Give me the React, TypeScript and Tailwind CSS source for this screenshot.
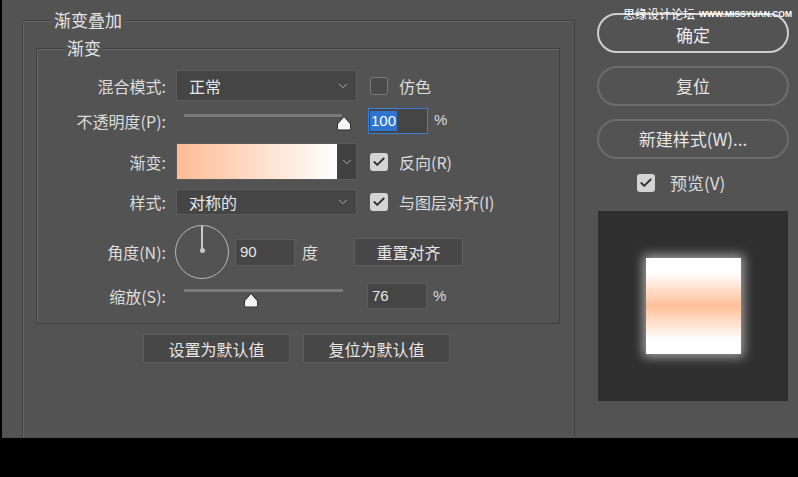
import React from 'react';
import { Check, ChevronDown } from 'lucide-react';

const font = { fontFamily: '"Noto Sans CJK SC", "Noto Sans", sans-serif' };

const Thumb = () => (
  <svg width="16" height="16" viewBox="0 0 16 16">
    <path d="M8 1.5 L14.5 9 V13.5 Q14.5 15 13 15 H3 Q1.5 15 1.5 13.5 V9 Z" fill="#f4f4f4" stroke="#2e2e2e" strokeWidth="1" strokeLinejoin="round" />
  </svg>
);

const Box = ({ checked }: { checked?: boolean }) =>
  checked ? (
    <div className="w-[18px] h-[18px] rounded-[3px] bg-[#d4d4d4] flex items-center justify-center">
      <Check size={14} strokeWidth={3.2} className="text-[#2f2f2f]" />
    </div>
  ) : (
    <div className="w-[18px] h-[18px] rounded-[3px] border border-[#7a7a7a] bg-[#4a4a4a]"></div>
  );

const Select = ({ value, h }: { value: string; h: string }) => (
  <div className={`w-[181px] ${h} bg-[#454545] border border-[#5b5b5b] flex items-center justify-between pl-[12px] pr-[6px]`}>
    <span className="text-[16px] text-[#e6e6e6]">{value}</span>
    <ChevronDown size={14} strokeWidth={1.6} className="text-[#b5b5b5]" />
  </div>
);

const Label = ({ children }: { children: React.ReactNode }) => (
  <div className="w-[129px] text-right text-[16px] text-[#dcdcdc] shrink-0">{children}</div>
);

const App = () => {
  return (
    <div className="w-[798px] h-[477px] bg-black overflow-hidden" style={font}>
      <div className="relative ml-[2px] h-[438px] bg-[#535353] overflow-hidden flex">
        {/* watermark */}
        <div className="absolute top-[7px] left-[621px] flex items-center gap-[4px] text-white whitespace-nowrap">
          <span className="text-[12px] leading-[14px]">思缘设计论坛</span>
          <span className="text-[8.5px] leading-[14px] font-bold" style={{ fontFamily: '"Liberation Sans", sans-serif' }}>
            WWW.MISSYUAN.COM
          </span>
        </div>

        {/* left: 渐变叠加 group */}
        <div className="ml-[20px] mt-[20px] w-[553px] h-[440px] border border-[#404040] shadow-[inset_1px_1px_0_#676767] shrink-0">
          <div className="-mt-[11px] ml-[29px] px-[2px] w-fit bg-[#535353] text-[17px] leading-[20px] text-[#e4e4e4]">渐变叠加</div>

          <div className="ml-[13px] mt-[18px] w-[524px] h-[276px] border border-[#404040] shadow-[inset_1px_1px_0_#676767]">
            <div className="-mt-[11px] ml-[28px] px-[2px] w-fit bg-[#535353] text-[17px] leading-[20px] text-[#e4e4e4]">渐变</div>

            <div className="flex flex-col">
              {/* 混合模式 */}
              <div className="mt-[12px] h-[31px] flex items-center">
                <Label>混合模式:</Label>
                <div className="ml-[10px]">
                  <Select value="正常" h="h-[31px]" />
                </div>
                <div className="ml-[13px]">
                  <Box />
                </div>
                <span className="ml-[11px] text-[16px] text-[#dcdcdc]">仿色</span>
              </div>

              {/* 不透明度 */}
              <div className="mt-[7px] h-[25px] flex items-center">
                <Label>不透明度(P):</Label>
                <div className="ml-[10px] w-[181px] h-[25px] relative">
                  <div className="absolute left-[8px] top-[6px] w-[158px] h-[3px] bg-[#7a7a7a]"></div>
                  <div className="absolute left-[160px] top-[7px]">
                    <Thumb />
                  </div>
                </div>
                <div className="ml-[11px] w-[60px] h-[26px] border border-[#3d7fd4] bg-[#454545] flex items-center pl-[1px]">
                  <span className="bg-[#2f74d0] text-white text-[15px] leading-[20px] px-[1px]" style={{ fontFamily: '"Liberation Sans", sans-serif' }}>100</span>
                </div>
                <span className="ml-[6px] text-[15px] text-[#dcdcdc]" style={{ fontFamily: '"Liberation Sans", sans-serif' }}>%</span>
              </div>

              {/* 渐变 */}
              <div className="mt-[10px] h-[37px] flex items-center">
                <Label>渐变:</Label>
                <div className="ml-[10px] w-[181px] h-[37px] flex border border-[#5b5b5b]">
                  <div className="w-[160px] h-full bg-gradient-to-r from-[#ffbb94] to-white"></div>
                  <div className="flex-1 bg-[#414141] flex items-center justify-center">
                    <ChevronDown size={14} strokeWidth={1.6} className="text-[#b5b5b5]" />
                  </div>
                </div>
                <div className="ml-[13px]">
                  <Box checked />
                </div>
                <span className="ml-[11px] text-[16px] text-[#dcdcdc]">反向(R)</span>
              </div>

              {/* 样式 */}
              <div className="mt-[9px] h-[25px] flex items-center">
                <Label>样式:</Label>
                <div className="ml-[10px]">
                  <Select value="对称的" h="h-[26px]" />
                </div>
                <div className="ml-[13px]">
                  <Box checked />
                </div>
                <span className="ml-[11px] text-[16px] text-[#dcdcdc]">与图层对齐(I)</span>
              </div>

              {/* 角度 */}
              <div className="mt-[11px] h-[54px] flex items-center">
                <Label>角度(N):</Label>
                <div className="ml-[9px] w-[54px] h-[54px] rounded-full border-[1.5px] border-[#b8b8b8] flex flex-col items-center">
                  <div className="w-[1.5px] h-[24px] bg-[#c8c8c8]"></div>
                  <div className="-mt-[2px] w-[5px] h-[5px] rounded-full bg-[#c8c8c8]"></div>
                </div>
                <div className="ml-[6px] w-[60px] h-[27px] bg-[#454545] border border-[#5b5b5b] flex items-center pl-[4px] text-[15px] text-[#e6e6e6]" style={{ fontFamily: '"Liberation Sans", sans-serif' }}>
                  90
                </div>
                <span className="ml-[7px] w-[52px] text-[16px] text-[#dcdcdc]">度</span>
                <div className="w-[109px] h-[28px] bg-[#474747] border border-[#5e5e5e] flex items-center justify-center text-[16px] text-[#e6e6e6]">
                  重置对齐
                </div>
              </div>

              {/* 缩放 */}
              <div className="mt-[4px] h-[26px] flex items-center">
                <Label>缩放(S):</Label>
                <div className="ml-[10px] w-[181px] h-[26px] relative">
                  <div className="absolute left-[8px] top-[6px] w-[159px] h-[3px] bg-[#7a7a7a]"></div>
                  <div className="absolute left-[67px] top-[9px]">
                    <Thumb />
                  </div>
                </div>
                <div className="ml-[10px] w-[60px] h-[26px] bg-[#454545] border border-[#5b5b5b] flex items-center pl-[4px] text-[15px] text-[#e6e6e6]" style={{ fontFamily: '"Liberation Sans", sans-serif' }}>
                  76
                </div>
                <span className="ml-[6px] text-[15px] text-[#dcdcdc]" style={{ fontFamily: '"Liberation Sans", sans-serif' }}>%</span>
              </div>
            </div>
          </div>

          <div className="ml-[120px] mt-[10px] flex gap-[13px]">
            <div className="w-[147px] h-[29px] bg-[#474747] border border-[#5e5e5e] flex items-center justify-center text-[16px] text-[#e6e6e6]">
              设置为默认值
            </div>
            <div className="w-[147px] h-[29px] bg-[#474747] border border-[#5e5e5e] flex items-center justify-center text-[16px] text-[#e6e6e6]">
              复位为默认值
            </div>
          </div>
        </div>

        {/* right column */}
        <div className="ml-[22px] mt-[13px] w-[192px] flex flex-col shrink-0">
          <div className="h-[40px] rounded-full border-2 border-[#cfcfcf] flex items-center justify-center pt-[4px] text-[17px] text-[#ededed]">确定</div>
          <div className="mt-[13px] h-[40px] rounded-full border-2 border-[#6c6c6c] flex items-center justify-center text-[17px] text-[#e6e6e6]">复位</div>
          <div className="mt-[13px] h-[40px] rounded-full border-2 border-[#6c6c6c] flex items-center justify-center text-[17px] text-[#e6e6e6]">新建样式(W)...</div>
          <div className="mt-[15px] h-[18px] flex items-center">
            <div className="ml-[40px]">
              <Box checked />
            </div>
            <span className="ml-[15px] text-[17px] text-[#dcdcdc]">预览(V)</span>
          </div>
          <div className="mt-[19px] ml-[1px] w-[190px] h-[190px] bg-[#2f2f2f] flex items-center justify-center">
            <div className="w-[95px] h-[96px] bg-gradient-to-b from-white from-[15%] via-[#fdbf98] to-white to-[85%] shadow-[0_0_10px_3px_rgba(255,255,255,0.55)]"></div>
          </div>
        </div>
      </div>
    </div>
  );
};

export default App;
